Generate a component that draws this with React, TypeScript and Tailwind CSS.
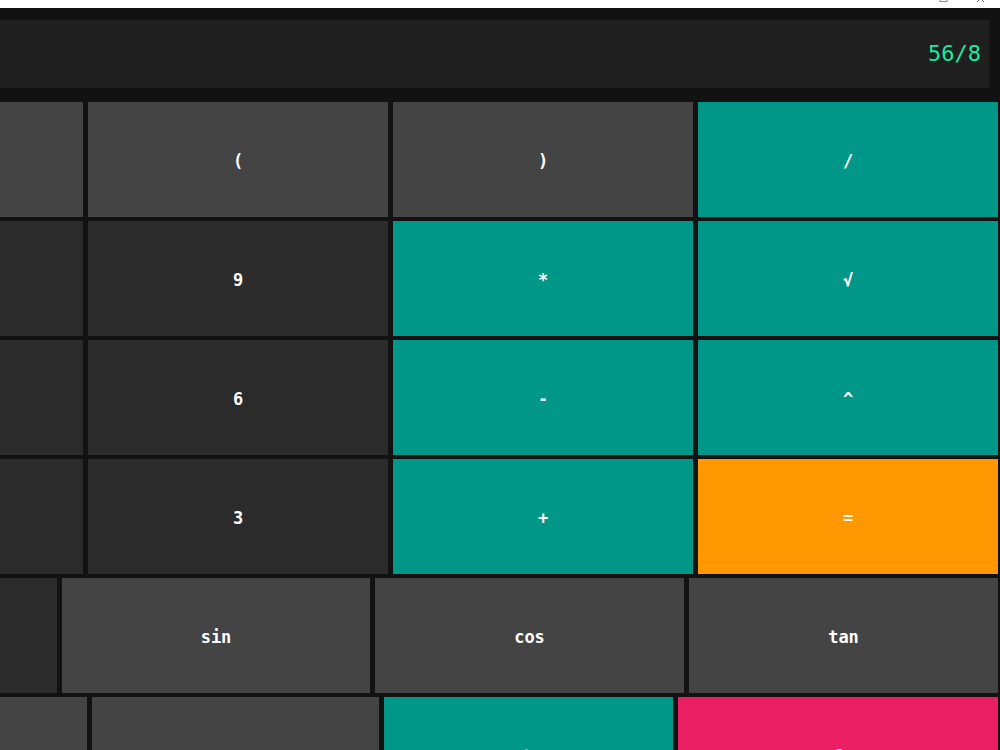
import React from 'react';

type Key = { label: string; tone: 'gray' | 'dark' | 'teal' | 'orange' | 'pink'; w: string };

const toneClass: Record<Key['tone'], string> = {
  gray: 'bg-[#444444]',
  dark: 'bg-[#2b2b2b]',
  teal: 'bg-[#009688]',
  orange: 'bg-[#ff9800]',
  pink: 'bg-[#e91e63]',
};

// first column of each row sits off-screen to the left
const rows: Key[][] = [
  [
    { label: '', tone: 'gray', w: 'w-[300px]' },
    { label: '(', tone: 'gray', w: 'w-[300px]' },
    { label: ')', tone: 'gray', w: 'w-[300px]' },
    { label: '/', tone: 'teal', w: 'w-[300px]' },
  ],
  [
    { label: '', tone: 'dark', w: 'w-[300px]' },
    { label: '9', tone: 'dark', w: 'w-[300px]' },
    { label: '*', tone: 'teal', w: 'w-[300px]' },
    { label: '√', tone: 'teal', w: 'w-[300px]' },
  ],
  [
    { label: '', tone: 'dark', w: 'w-[300px]' },
    { label: '6', tone: 'dark', w: 'w-[300px]' },
    { label: '-', tone: 'teal', w: 'w-[300px]' },
    { label: '^', tone: 'teal', w: 'w-[300px]' },
  ],
  [
    { label: '', tone: 'dark', w: 'w-[300px]' },
    { label: '3', tone: 'dark', w: 'w-[300px]' },
    { label: '+', tone: 'teal', w: 'w-[300px]' },
    { label: '=', tone: 'orange', w: 'w-[300px]' },
  ],
  [
    { label: '', tone: 'dark', w: 'w-[309px]' },
    { label: 'sin', tone: 'gray', w: 'w-[308px]' },
    { label: 'cos', tone: 'gray', w: 'w-[309px]' },
    { label: 'tan', tone: 'gray', w: 'w-[309px]' },
  ],
  [
    { label: '', tone: 'gray', w: 'w-[288px]' },
    { label: '.', tone: 'gray', w: 'w-[287px]' },
    { label: '%', tone: 'teal', w: 'w-[289px]' },
    { label: 'C', tone: 'pink', w: 'w-[320px]' },
  ],
];

export default function App() {
  return (
    <div className="w-[1000px] h-[750px] overflow-hidden bg-[#121212] font-['DejaVu_Sans_Mono',monospace]">
      {/* window chrome, mostly cut off */}
      <div className="relative h-[8px] bg-white overflow-hidden">
        <svg className="absolute left-[939px] top-[-6px]" width="9" height="9" viewBox="0 0 9 9">
          <rect x="1" y="0.5" width="7" height="7" fill="none" stroke="#8a8a8a" strokeWidth="1" />
        </svg>
        <svg className="absolute left-[976px] top-[-5px]" width="9" height="9" viewBox="0 0 9 9">
          <path d="M1 0 L8 7 M8 0 L1 7" stroke="#6a6a6a" strokeWidth="1" />
        </svg>
      </div>

      <div className="pt-[12px] pr-[2px]">
        <div className="mr-[9px] h-[68px] bg-[#1f1f1f] flex items-center justify-end pr-[8px]">
          <span className="text-[22px] text-[#1de9a0] leading-none">56/8</span>
        </div>

        <div className="mt-[14px] flex flex-col gap-[4px]">
          {rows.map((row, i) => (
            <div key={i} className="flex justify-end gap-[5px] h-[115px] shrink-0">
              {row.map((k, j) => (
                <button
                  key={j}
                  className={`${k.w} ${toneClass[k.tone]} shrink-0 h-full pt-[4px] flex items-center justify-center text-white font-bold text-[17px]`}
                >
                  {k.label}
                </button>
              ))}
            </div>
          ))}
        </div>
      </div>
    </div>
  );
}
